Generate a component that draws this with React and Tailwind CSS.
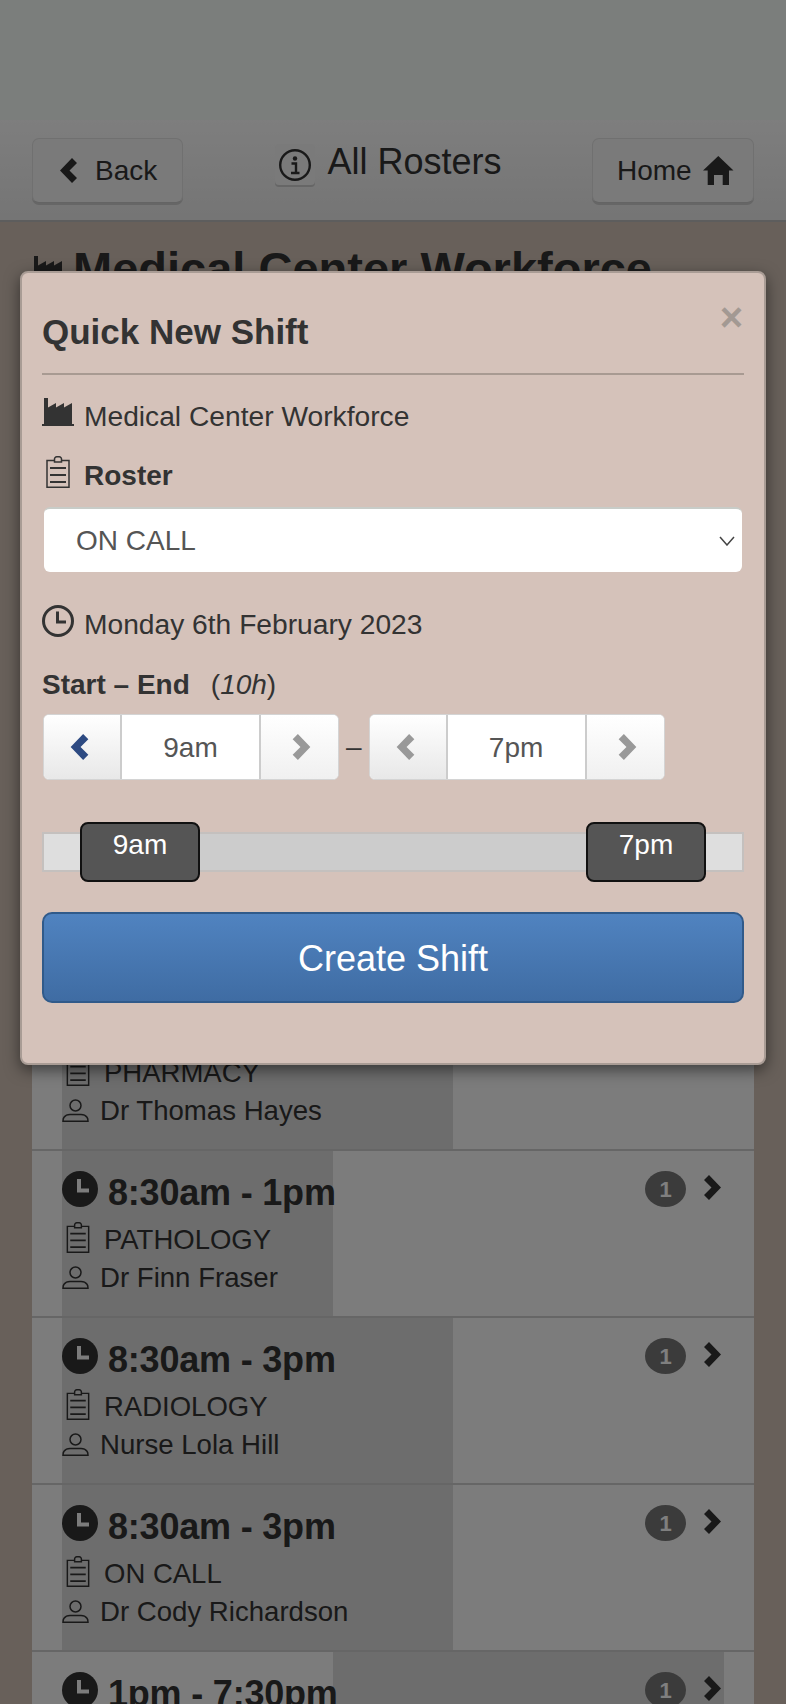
const F = "font-['Liberation_Sans',Arial,sans-serif]";

function ChevR({ className }) {
  return (
    <svg viewBox="0 0 17 25" className={className} fill="currentColor">
      <polygon points="0,5 5,0 17,12.500 5,25 0,20 7.500,12.500" />
    </svg>
  );
}
function ChevL({ className }) {
  return (
    <svg viewBox="0 0 17 25" className={className} fill="currentColor">
      <polygon points="17,5 12,0 0,12.500 12,25 17,20 9.500,12.500" />
    </svg>
  );
}
function Clipboard({ className }) {
  return (
    <svg viewBox="0 0 24 32" className={className} fill="none" stroke="currentColor" strokeWidth="1.500">
      <path d="M8 4.500H1v26.750h22V4.500h-7" />
      <path d="M8.500 6V3a2.200 2.200 0 0 1 2.200-2.200h2.600A2.200 2.200 0 0 1 15.500 3v3z" />
      <path d="M4 12h16M4 19h16M4 26h16" strokeWidth="1.800" />
    </svg>
  );
}
function User({ className }) {
  return (
    <svg viewBox="0 0 27 23" className={className} fill="none" stroke="currentColor" strokeWidth="1.500">
      <circle cx="13.500" cy="6.500" r="5.500" />
      <path d="M1 22.200c0-1.200 0-2.700 1-4 1.300-1.700 3.500-2.700 6-2.700h11c2.500 0 4.700 1 6 2.700 1 1.300 1 2.800 1 4z" />
    </svg>
  );
}
function ClockSolid({ className }) {
  return (
    <svg viewBox="0 0 36 36" className={className}>
      <circle cx="18" cy="18" r="18" fill="currentColor" />
      <path d="M17 8v11.500h10" fill="none" stroke="#f8f8f8" strokeWidth="4" />
    </svg>
  );
}
function ClockLine({ className }) {
  return (
    <svg viewBox="0 0 32 32" className={className} fill="none" stroke="currentColor">
      <circle cx="16" cy="16" r="14.500" strokeWidth="3" />
      <path d="M15.500 6.500V17H24" strokeWidth="3" />
    </svg>
  );
}
function Factory({ className }) {
  return (
    <svg viewBox="0 0 32 28" className={className} fill="currentColor">
      <path d="M2 26V0h4v9.500l8-4.500v4.500l8-4.500v4.500l8-4.500V26h2v2H0v-2z" />
    </svg>
  );
}
function Home({ className }) {
  return (
    <svg viewBox="0 0 31 29" className={className} fill="currentColor">
      <path d="M15.300 0L30.500 14.500h-4.500V29h-6.300V19h-8.700v10H4.700V14.500H0z" />
    </svg>
  );
}
function Info({ className }) {
  return (
    <svg viewBox="0 0 32 32" className={className} fill="none" stroke="currentColor">
      <circle cx="16" cy="16" r="14.800" strokeWidth="2.400" />
      <circle cx="16" cy="9.500" r="2.200" fill="currentColor" stroke="none" />
      <path d="M12.500 14.500h4.500v9M12 24h8.500" strokeWidth="2.400" />
    </svg>
  );
}

function Row({ time, roster, person, band }) {
  return (
    <div className="relative h-[167px] shrink-0 border-b-2 border-[#cccccc] bg-[#f8f8f8]">
      <div className={`absolute inset-y-0 ${band} bg-[#dadada]`} />
      <div className="relative flex justify-between pt-[20px] pl-[30px] pr-[33px]">
        <div>
          <div className="flex h-[36px] items-center">
            <ClockSolid className="h-[36px] w-[36px] text-[#333]" />
            {time && <span className="ml-[10px] translate-y-[4px] text-[36px] font-bold leading-none tracking-[-0.2px] text-[#333]">{time}</span>}
          </div>
          {roster && (
            <div className="mt-[15px] flex h-[31px] items-center">
              <Clipboard className="ml-[4px] h-[31px] w-[24px] text-[#333]" />
              <span className="ml-[14px] translate-y-[2px] text-[27.5px] leading-none text-[#333]">{roster}</span>
            </div>
          )}
          {person && (
            <div className="mt-[11px] flex h-[26px] items-center">
              <User className="h-[23px] w-[27px] text-[#333]" />
              <span className="ml-[11px] translate-y-[1px] text-[27.6px] leading-none text-[#333]">{person}</span>
            </div>
          )}
        </div>
        <div className="flex items-start">
          <div className="flex h-[36px] w-[41px] items-center justify-center rounded-[50%] bg-[#777] text-[22px] font-bold text-white">1</div>
          <ChevR className="ml-[18px] mt-[4px] h-[25px] w-[17px] text-[#333]" />
        </div>
      </div>
    </div>
  );
}

function Spinner({ value, leftClass }) {
  return (
    <div className="flex h-[66px] overflow-hidden rounded-[6px] border border-[#d4d4d4] bg-white">
      <div className="flex w-[78px] items-center justify-center border-r-2 border-[#ccc] bg-gradient-to-b from-white to-[#e8e8e8] pr-[5px]">
        <ChevL className={`h-[26px] w-[19px] ${leftClass}`} />
      </div>
      <div className="flex w-[137px] items-center justify-center pt-[2px] text-[28px] text-[#555]">{value}</div>
      <div className="flex w-[79px] items-center justify-center border-l-2 border-[#ccc] bg-gradient-to-b from-white to-[#f0f0f0] pl-[4px]">
        <ChevR className="h-[26px] w-[19px] text-[#999]" />
      </div>
    </div>
  );
}

export default function App() {
  return (
    <div className={`relative h-[1704px] w-[786px] overflow-hidden bg-[#d0c0b4] ${F}`}>
      <div className="h-[120px] bg-[#f6fcf8]" />
      <div className="flex h-[102px] items-start justify-between border-b-2 border-[#bbbbbb] bg-gradient-to-b from-[#fcfcfc] to-[#eaeaea] px-[32px] pt-[18px]">
        <button className="flex h-[65px] w-[151px] items-center rounded-[7px] border border-[#e0e0e0] border-b-[#c8c8c8] bg-[#f4f4f4] pl-[26px] text-[28px] text-[#333] shadow-[0_2px_0_#cccccc]">
          <ChevL className="h-[25px] w-[19px]" />
          <span className="ml-[17px]">Back</span>
        </button>
        <div className="ml-[2px] mt-[6px] flex items-center">
          <div className="flex h-[41px] w-[40px] items-center justify-center rounded-[4px] bg-[#f4f4f4] shadow-[0_2px_0_#cccccc]">
            <Info className="h-[32px] w-[32px] text-[#333]" />
          </div>
          <span className="ml-[12px] -translate-y-[3px] text-[36px] leading-none text-[#333]">All Rosters</span>
        </div>
        <button className="flex h-[65px] w-[162px] items-center rounded-[7px] border border-[#e0e0e0] border-b-[#c8c8c8] bg-[#f4f4f4] pl-[24px] text-[28px] text-[#333] shadow-[0_2px_0_#cccccc]">
          <span>Home</span>
          <Home className="ml-[11px] h-[29px] w-[31px]" />
        </button>
      </div>

      <div className="flex h-[762px] items-start pl-[32px] pt-[19px]">
        <Factory className="mt-[15px] h-[28px] w-[32px] text-[#333]" />
        <h1 className="ml-[9px] text-[47px] font-bold leading-[56px] text-[#333]">Medical Center Workforce</h1>
      </div>

      <div className="ml-[32px] flex w-[722px] flex-col">
        <Row roster="PHARMACY" person="Dr Thomas Hayes" band="left-[30px] w-[391px]" />
        <Row time="8:30am - 1pm" roster="PATHOLOGY" person="Dr Finn Fraser" band="left-[30px] w-[271px]" />
        <Row time="8:30am - 3pm" roster="RADIOLOGY" person="Nurse Lola Hill" band="left-[30px] w-[391px]" />
        <Row time="8:30am - 3pm" roster="ON CALL" person="Dr Cody Richardson" band="left-[30px] w-[391px]" />
        <Row time="1pm - 7:30pm" band="left-[301px] w-[391px]" />
      </div>

      <div className="absolute inset-0 bg-black/50" />

      <div className="absolute left-[20px] top-[271px] h-[794px] w-[746px] rounded-[8px] border-2 border-[#a99c95] bg-[#d5c2ba] px-[20px] text-[#333] shadow-[0_5px_15px_rgba(0,0,0,0.5)]">
        <div className="flex h-[102px] items-start justify-between border-b-2 border-[#a89a92]">
          <h2 className="mt-[41px] text-[35px] font-bold leading-none">Quick New Shift</h2>
          <span className="mr-[1px] mt-[24px] text-[40px] font-bold leading-none text-[#a39993]">×</span>
        </div>
        <div className="mt-[21px] flex h-[32px] items-center">
          <Factory className="h-[28px] w-[32px]" />
          <span className="ml-[10px] translate-y-[4px] text-[28.2px] leading-none">Medical Center Workforce</span>
        </div>
        <div className="mt-[26px] flex h-[36px] items-center">
          <Clipboard className="ml-[4px] h-[32px] w-[24px]" />
          <span className="ml-[14px] translate-y-[4px] text-[28px] font-bold leading-none">Roster</span>
        </div>
        <div className="ml-[2px] mt-[17px] flex h-[65px] w-[698px] items-center justify-between rounded-[6px] border-t-2 border-[#c8ccc8] bg-white pl-[32px] pr-[7px] text-[28px] text-[#555]">
          <span>ON CALL</span>
          <svg viewBox="0 0 16 10" className="h-[10px] w-[16px]" fill="none" stroke="#444" strokeWidth="1.500"><path d="M1 1l7 8 7-8" /></svg>
        </div>
        <div className="mt-[32px] flex h-[34px] items-center">
          <ClockLine className="h-[32px] w-[32px]" />
          <span className="ml-[10px] translate-y-[3px] text-[28.2px] leading-none">Monday 6th February 2023</span>
        </div>
        <div className="mt-[30px] flex h-[34px] items-center text-[28px] leading-none">
          <span className="font-bold">Start – End</span>
          <span className="ml-[21px]">(<i>10h</i>)</span>
        </div>
        <div className="ml-[1px] mt-[12px] flex items-center">
          <Spinner value="9am" leftClass="text-[#2d4a82]" />
          <span className="mx-[7px] text-[28px]">–</span>
          <Spinner value="7pm" leftClass="text-[#999]" />
        </div>
        <div className="relative mt-[42px] h-[60px]">
          <div className="absolute inset-x-0 top-[10px] flex h-[40px] border-2 border-[#c4c0be] bg-[#dedede]">
            <div className="ml-[36px] mr-[36px] flex-1 bg-[#cccccc]" />
          </div>
          <div className="absolute left-[38px] top-0 h-[60px] w-[120px] rounded-[8px] border-2 border-[#111] bg-[#555] text-center text-[28px] text-white">9am</div>
          <div className="absolute left-[544px] top-0 h-[60px] w-[120px] rounded-[8px] border-2 border-[#111] bg-[#555] text-center text-[28px] text-white">7pm</div>
        </div>
        <button className="mt-[30px] flex h-[91px] w-[702px] items-center justify-center rounded-[10px] border-2 border-[#305a8a] bg-gradient-to-b from-[#5083c0] to-[#3f6ca3] pt-[2px] text-[36px] text-white">
          Create Shift
        </button>
      </div>
    </div>
  );
}
